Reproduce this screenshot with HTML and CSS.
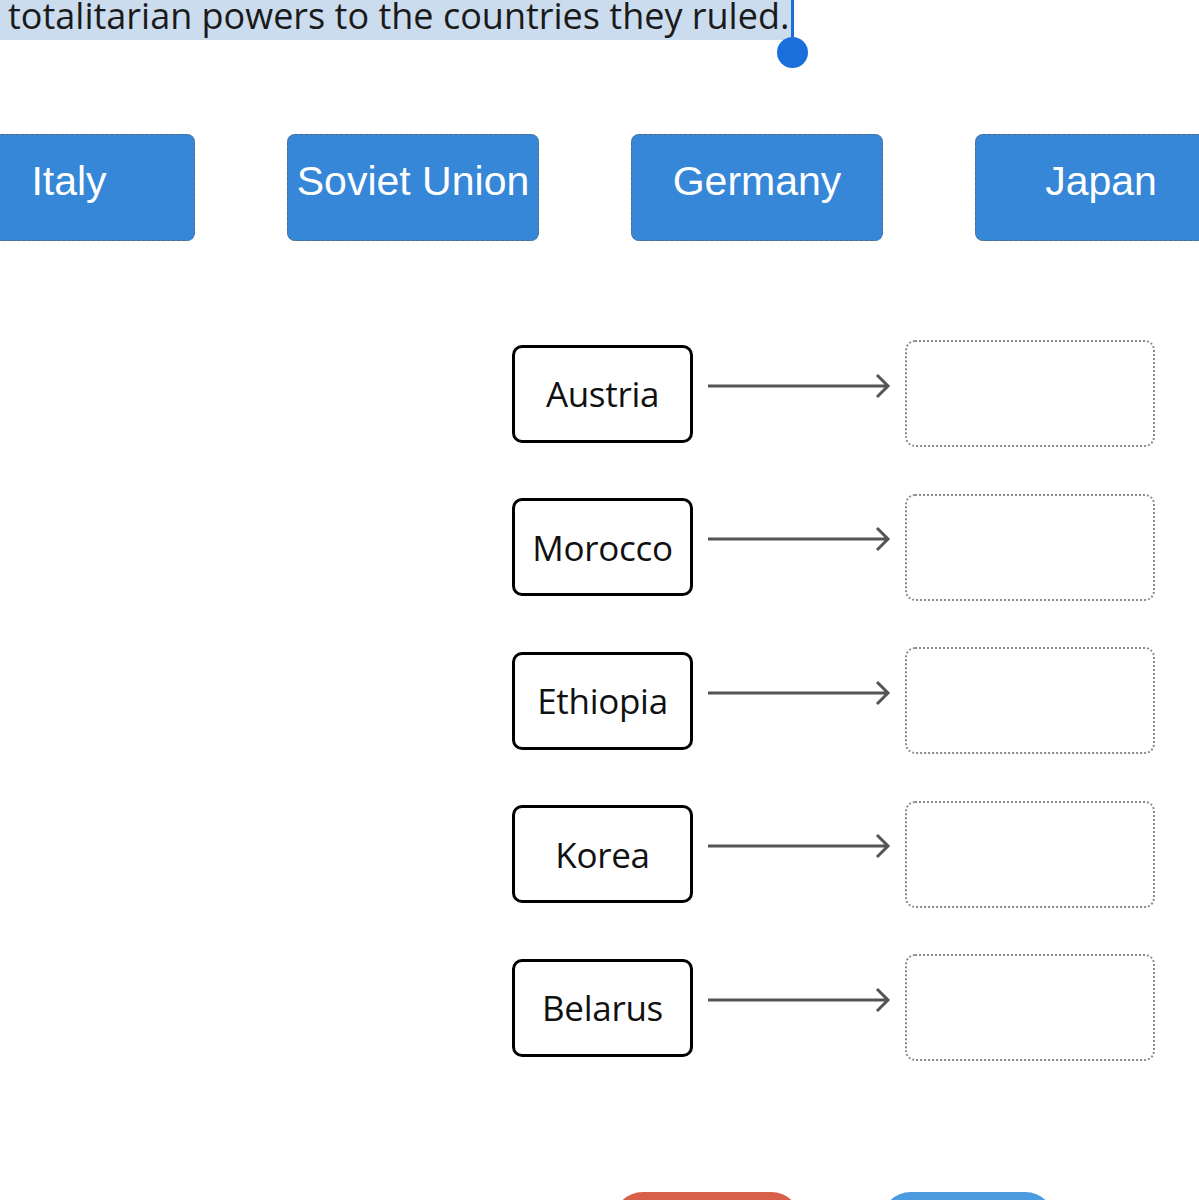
FILE: index.html
```html
<!DOCTYPE html>
<html>
<head>
<meta charset="utf-8">
<link rel="stylesheet" href="styles.css">
</head>
<body>
<div class="page">
  <p class="question"><span class="sel">totalitarian powers to the countries they ruled.</span><span class="caret"><span class="knob"></span></span></p>

  <div class="choices">
    <div class="chip">Italy</div>
    <div class="chip">Soviet Union</div>
    <div class="chip">Germany</div>
    <div class="chip">Japan</div>
  </div>

  <div class="matches">
    <div class="row">
      <div class="src">Austria</div>
      <svg class="arrow" width="212" height="30" viewBox="0 0 212 30"><path d="M15 9H195M184 -2L195 9L184 20" fill="none" stroke="#555" stroke-width="3"/></svg>
      <div class="slot"></div>
    </div>
    <div class="row">
      <div class="src">Morocco</div>
      <svg class="arrow" width="212" height="30" viewBox="0 0 212 30"><path d="M15 9H195M184 -2L195 9L184 20" fill="none" stroke="#555" stroke-width="3"/></svg>
      <div class="slot"></div>
    </div>
    <div class="row">
      <div class="src">Ethiopia</div>
      <svg class="arrow" width="212" height="30" viewBox="0 0 212 30"><path d="M15 9H195M184 -2L195 9L184 20" fill="none" stroke="#555" stroke-width="3"/></svg>
      <div class="slot"></div>
    </div>
    <div class="row">
      <div class="src">Korea</div>
      <svg class="arrow" width="212" height="30" viewBox="0 0 212 30"><path d="M15 9H195M184 -2L195 9L184 20" fill="none" stroke="#555" stroke-width="3"/></svg>
      <div class="slot"></div>
    </div>
    <div class="row">
      <div class="src">Belarus</div>
      <svg class="arrow" width="212" height="30" viewBox="0 0 212 30"><path d="M15 9H195M184 -2L195 9L184 20" fill="none" stroke="#555" stroke-width="3"/></svg>
      <div class="slot"></div>
    </div>
  </div>

  <div class="actions">
    <div class="btn red"></div>
    <div class="btn blue"></div>
  </div>
</div>
</body>
</html>
```

FILE: styles.css
```css
html, body {
  margin: 0;
  padding: 0;
  background: #fff;
  overflow: hidden;
}
.page {
  width: 1199px;
  height: 1200px;
  overflow: hidden;
  font-family: "Open Sans", "Noto Sans", sans-serif;
  color: #111;
}
.question {
  margin: -8px 0 0 0;
  font-size: 36px;
  line-height: 48px;
  position: relative;
  height: 48px;
  letter-spacing: 0;
}
.sel {
  background: #cbdcee;
  padding: 0 2px 0 8px;
  color: #1a1a1a;
}
.caret {
  position: absolute;
  display: inline-block;
  width: 3px;
  height: 58px;
  background: #1a6fdc;
  top: 0;
}
.knob {
  position: absolute;
  left: -14px;
  top: 45px;
  width: 31px;
  height: 31px;
  border-radius: 50%;
  background: #1a6fdc;
}
.choices {
  display: flex;
  gap: 92px;
  margin: 94px 0 0 -57px;
}
.chip {
  flex: 0 0 252px;
  height: 107px;
  box-sizing: border-box;
  background: #3787d8;
  border: 1px dashed #55687f;
  border-radius: 8px;
  color: #fff;
  font-family: "Liberation Sans", Arial, sans-serif;
  font-size: 41px;
  display: flex;
  align-items: center;
  justify-content: center;
  padding-bottom: 12px;
}
.matches {
  display: flex;
  flex-direction: column;
  gap: 46.5px;
  margin-top: 99px;
  padding-left: 512px;
}
.row {
  display: flex;
  align-items: center;
  height: 107px;
}
.src {
  box-sizing: border-box;
  width: 181px;
  height: 98px;
  border: 3.5px solid #000;
  border-radius: 10px;
  display: flex;
  align-items: center;
  justify-content: center;
  font-size: 35px;
  color: #111;
  letter-spacing: -0.3px;
}
.arrow {
  display: block;
  flex: 0 0 212px;
  overflow: visible;
  margin-top: -4px;
}
.slot {
  box-sizing: border-box;
  width: 250px;
  height: 107px;
  border: 2px dotted #8a8a8a;
  border-radius: 10px;
}
.actions {
  display: flex;
  gap: 80px;
  margin-top: 131px;
  padding-left: 613px;
}
.btn {
  height: 60px;
  border-radius: 30px;
}
.red {
  width: 188px;
  background: #d8604b;
}
.blue {
  width: 174px;
  background: #4b9be0;
}
```
